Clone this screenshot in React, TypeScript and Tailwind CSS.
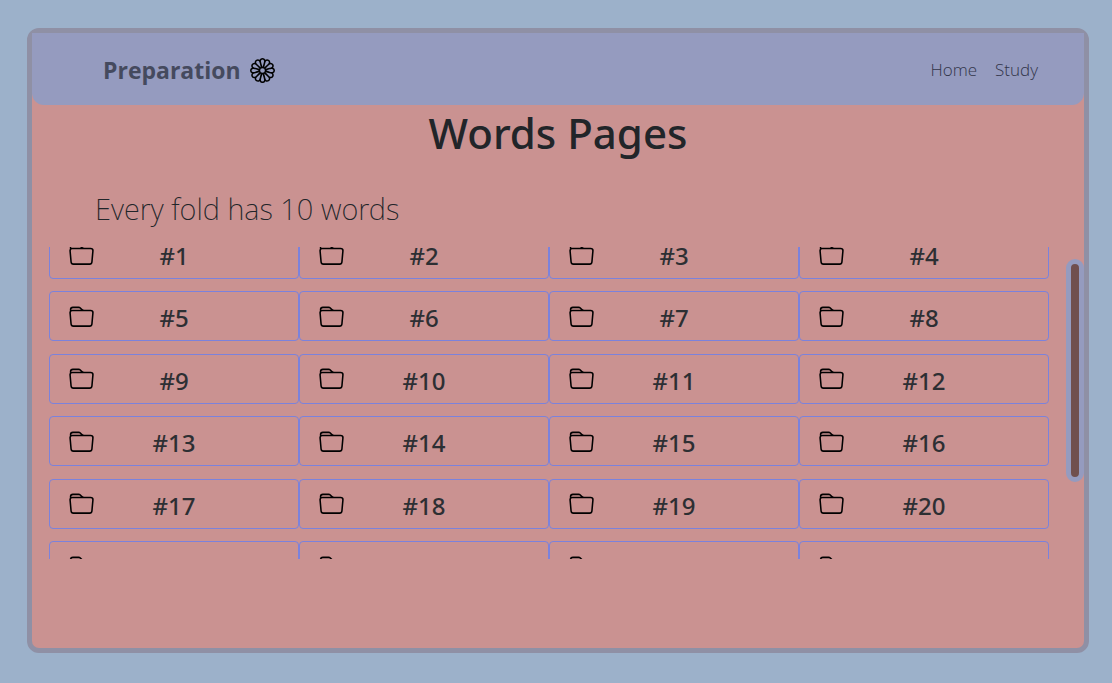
import { useEffect, useRef, useState } from "react";
import { BsFlower1, BsFolder } from "react-icons/bs";

const folds = Array.from({ length: 28 }, (_, i) => i + 1);

function Header() {
  return (
    <header className="flex h-18 items-center justify-between rounded-b-xl bg-[#959bbf] pr-[46px] pl-[71px]">
      <a href="#home" className="flex items-center gap-[9px] pt-0.5 font-['Open_Sans',sans-serif] text-[23px] font-bold text-[#454a5e]">
        Preparation
        <BsFlower1 className="size-[25px] text-black" aria-hidden="true" />
      </a>
      <nav className="flex gap-[18px] pt-0.5 font-['Open_Sans',sans-serif] text-[17px] font-light text-[#32354a]">
        <a href="#home">Home</a>
        <a href="#study">Study</a>
      </nav>
    </header>
  );
}

function Fold({ number }: { number: number }) {
  return (
    <li>
      <a
        href={"#fold-" + number}
        className="grid h-[50px] grid-cols-[1fr_2fr_1fr] items-center rounded-[4px] border border-[#7b82dc] text-2xl font-medium text-[#2d2f33]"
      >
        <BsFolder className="mt-0.5 ml-[19px] size-[25px] text-black" aria-hidden="true" />
        <span className="pt-1 text-center">#{number}</span>
      </a>
    </li>
  );
}

function FoldList() {
  const listRef = useRef<HTMLDivElement>(null);
  const [thumb, setThumb] = useState({ top: 0, height: 0 });

  const measure = () => {
    const el = listRef.current;
    if (!el) return;
    const ratio = el.clientHeight / el.scrollHeight;
    setThumb({
      top: Math.floor(el.scrollTop * ratio),
      height: Math.round(el.clientHeight * ratio),
    });
  };

  useEffect(() => {
    if (listRef.current) listRef.current.scrollTop = 18;
    measure();
  }, []);

  return (
    <div className="flex h-78">
      <div
        className="min-w-0 flex-1 overflow-y-auto px-[17px] [scrollbar-width:none]"
        ref={listRef}
        onScroll={measure}
      >
        <ul className="grid h-[437px] grid-cols-4 grid-rows-7">
          {folds.map((n) => (
            <Fold key={n} number={n} />
          ))}
        </ul>
      </div>
      <div className="w-[18px]" aria-hidden="true">
        <div
          className="rounded-full border-5 border-[#959bbf] bg-[#704f4e]"
          style={{ marginTop: thumb.top, height: thumb.height }}
        />
      </div>
    </div>
  );
}

export default function App() {
  return (
    <div className="flex min-h-screen flex-col bg-[#9cb1ca] pt-7 pr-[23px] pb-[30px] pl-[27px] font-['Noto_Sans','Open_Sans',sans-serif]">
      <div className="flex-1 rounded-xl border-5 border-[#8f90a5] bg-[#ca9291]">
        <Header />
        <main>
          <h1 className="pt-0.5 pb-0.5 text-center text-[42px] leading-[52px] font-medium text-[#212529]">
            Words Pages
          </h1>
          <p className="px-[63px] pt-6 pb-[14px] text-[29px] leading-12 font-extralight text-[#212529]">
            Every fold has 10 words
          </p>
          <FoldList />
        </main>
      </div>
    </div>
  );
}
